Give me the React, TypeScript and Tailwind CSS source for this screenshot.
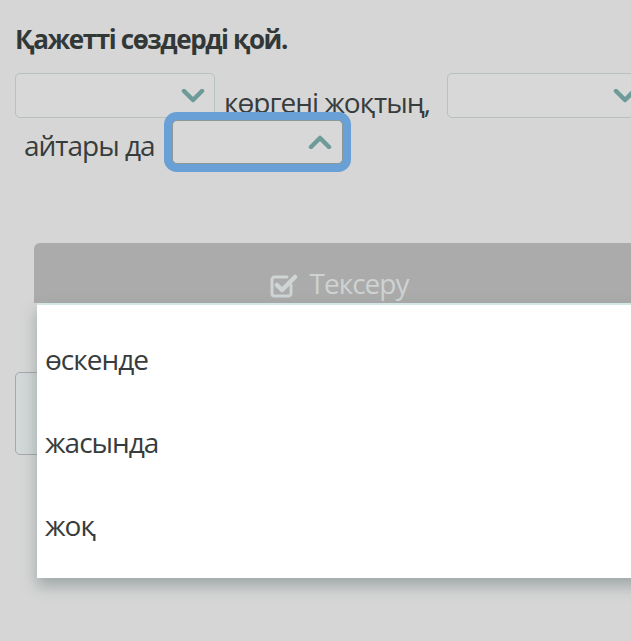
import React from 'react';

const ChevronDown: React.FC<{ up?: boolean }> = ({ up }) => (
  <svg width="24" height="14" viewBox="0 0 24 14" fill="none">
    <path
      d={up ? 'M3 12L12 3l9 9' : 'M3 2l9 9 9-9'}
      stroke="#6f9a9a"
      strokeWidth="4.5"
      strokeLinecap="round"
      strokeLinejoin="round"
    />
  </svg>
);

const CheckSquare: React.FC = () => (
  <svg width="28" height="27" viewBox="0 0 28 27" fill="none">
    <path
      d="M21 13v8.5a2.5 2.5 0 01-2.5 2.5h-14A2.5 2.5 0 012 21.5v-14A2.5 2.5 0 014.5 5H17"
      stroke="#cfd4d4"
      strokeWidth="3"
      strokeLinecap="round"
    />
    <path
      d="M7 13l5 5L25 5"
      stroke="#cfd4d4"
      strokeWidth="4.5"
      strokeLinecap="round"
      strokeLinejoin="round"
    />
  </svg>
);

/**
 * Бос таңдау өрісі
 */
const Select: React.FC<{ className?: string; open?: boolean }> = ({ className, open }) => (
  <div
    className={`flex shrink-0 items-center justify-end rounded-[5px] border bg-[#d8d8d8] ${
      open ? 'border-[#8e9898] ring-8 ring-[#69a0d6]' : 'border-[#b8c0c0]'
    } ${className ?? ''}`}
  >
    <ChevronDown up={open} />
  </div>
);

const options = ['өскенде', 'жасында', 'жоқ'];

export default function App() {
  return (
    <div className="relative h-[641px] w-[631px] overflow-hidden bg-[#d6d6d6] font-[family-name:'Open_Sans','Noto_Sans',sans-serif] text-[#373c3c]">
      <div className="pl-[15px] pt-[21px]">
        {/* Тапсырма */}
        <h1 className="text-[26px] font-bold leading-[36px] tracking-[-1.4px] text-[#323838]">
          Қажетті сөздерді қой.
        </h1>

        {/* Мәтін мен өрістер */}
        <div className="mt-[16px] flex items-end whitespace-nowrap">
          <Select className="h-[45px] w-[200px] pr-[9px]" />
          <span className="mb-[2px] ml-[9px] mr-[17px] text-[28px] leading-[28px] tracking-[-1px]">
            көргені жоқтың,
          </span>
          <Select className="h-[45px] w-[200px] pr-[9px]" />
        </div>
        <div className="mt-[2px] flex items-end whitespace-nowrap pl-[9px]">
          <span className="mb-[5px] mr-[17px] text-[28px] leading-[28px] tracking-[-1px]">
            айтары да
          </span>
          <Select open className="relative z-10 h-[44px] w-[171px] pr-[10px]" />
        </div>

        {/* Тексеру батырмасы */}
        <div className="ml-[19px] mt-[79px] flex h-[60px] w-[620px] items-end justify-center gap-[12px] rounded-tl-[6px] bg-[#ababab] pb-[4px] pr-[10px]">
          <CheckSquare />
          <span className="text-[28px] leading-[32px] tracking-[-1px] text-[#cdd2d2]">Тексеру</span>
        </div>

        <div className="mt-[69px] h-[83px] w-[60px] rounded-[5px] border border-[#a3a8a8] bg-[#d2d7d7]" />
      </div>

      {/* Ашылған тізім */}
      <div className="absolute left-[37px] top-[303px] h-[275px] w-[610px] border-t-2 border-[#d4e6e6] bg-white pt-[12px] shadow-[0_8px_14px_rgba(90,110,110,0.45)]">
        {options.map((o) => (
          <div key={o} className="flex h-[83px] items-center pl-[8px] text-[28px] tracking-[-1px] text-[#373c3c]">
            {o}
          </div>
        ))}
      </div>
    </div>
  );
}
